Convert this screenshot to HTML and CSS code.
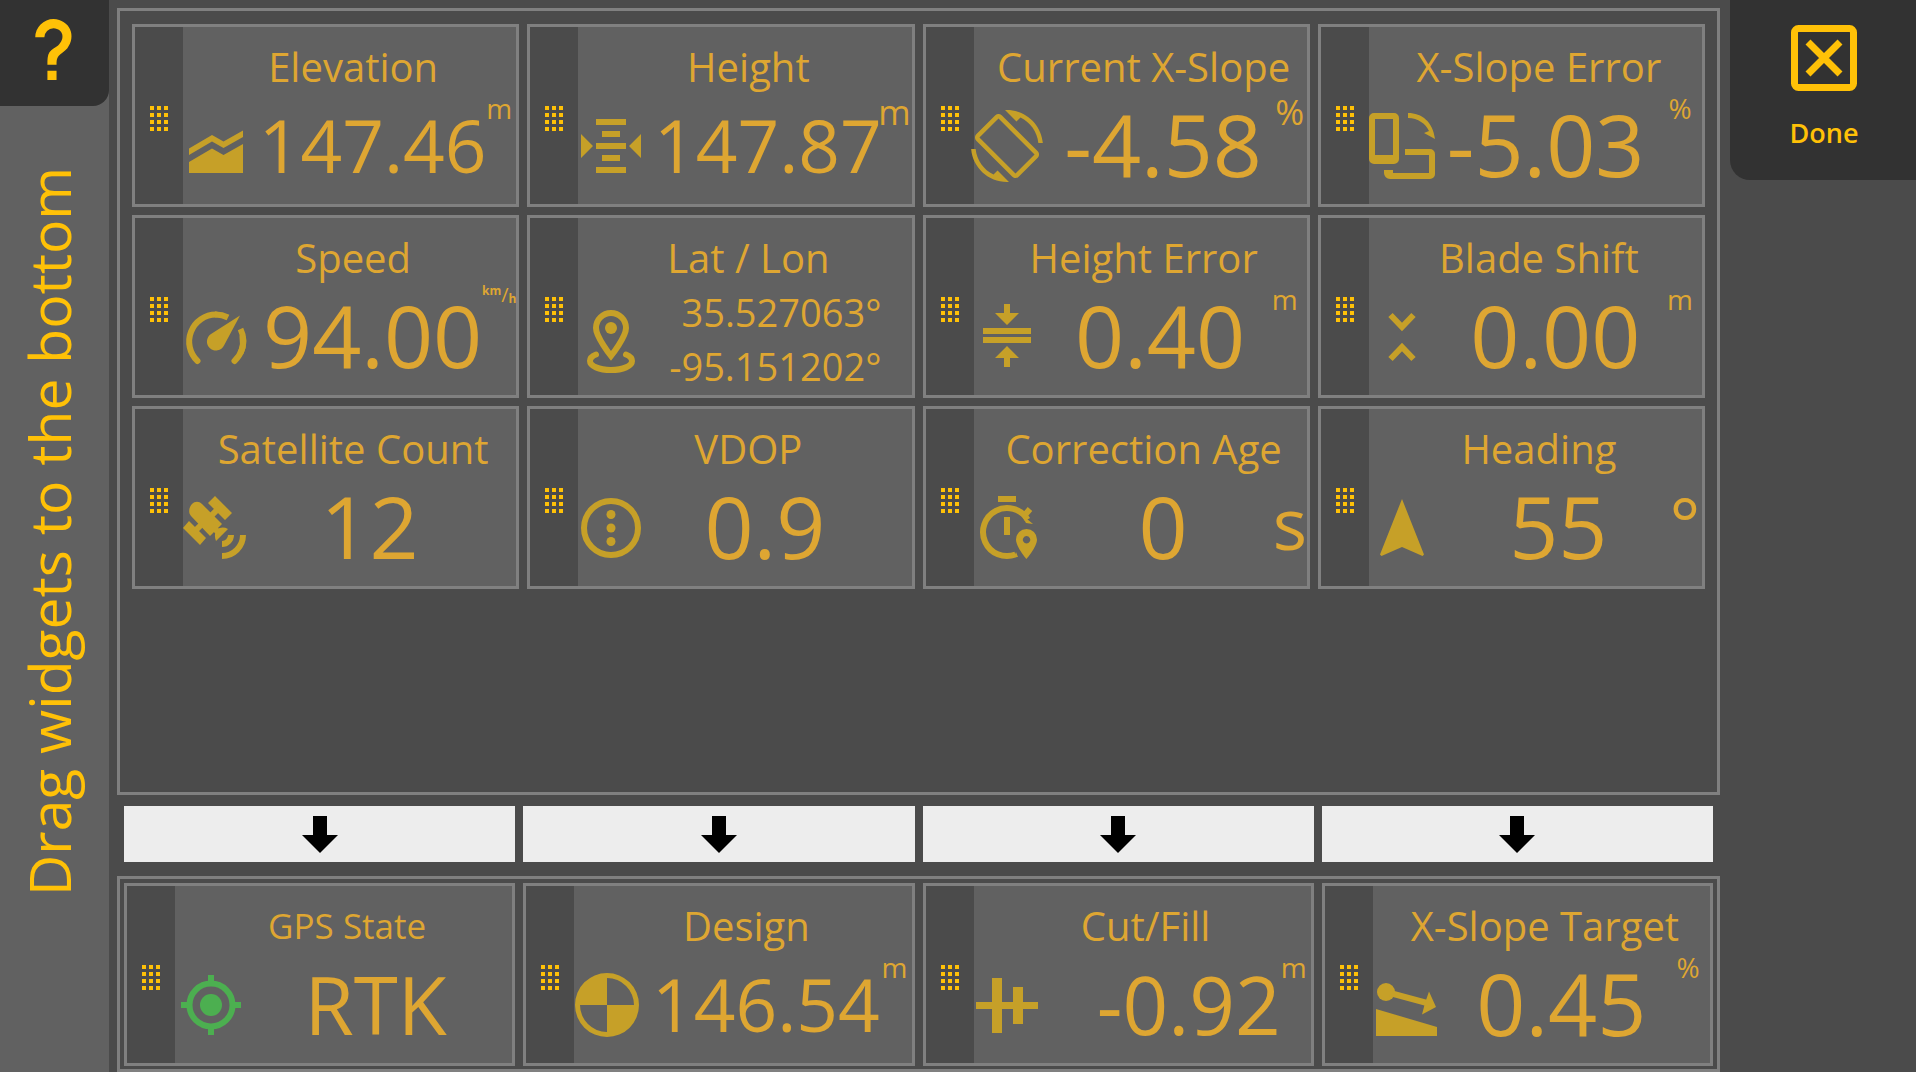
FILE: index.html
```html
<!DOCTYPE html>
<html lang="en">
<head>
<meta charset="utf-8">
<meta name="viewport" content="width=device-width, initial-scale=1">
<title>Widget layout</title>
<link rel="stylesheet" href="styles.css">
</head>
<body>
<svg class="sprite" aria-hidden="true">
  <symbol id="grip" viewBox="0 0 18 25">
    <path d="M0 0h4v4H0zM7 0h4v4H7zM14 0h4v4h-4zM0 7h4v4H0zM7 7h4v4H7zM14 7h4v4h-4zM0 14h4v4H0zM7 14h4v4H7zM14 14h4v4h-4zM0 21h4v4H0zM7 21h4v4H7zM14 21h4v4h-4z"/>
  </symbol>
  <symbol id="down" viewBox="0 0 36 37"><path d="M11 0h14v19h11L18 37 0 19h11z"/></symbol>
</svg>
<div class="app">
  <aside class="side">
    <button class="help" type="button" aria-label="Help">
      <svg class="help-icon" viewBox="0 0 24 24"><path d="M10,19H13V22H10V19M12,2C17.35,2.22 19.68,7.62 16.5,11.67C15.67,12.67 14.33,13.33 13.67,14.17C13,15 13,16 13,17H10C10,15.33 10,13.92 10.67,12.92C11.33,11.92 12.67,11.33 13.5,10.67C15.92,8.43 15.32,5.26 12,5A3,3 0 0,0 9,8H6A6,6 0 0,1 12,2Z"/></svg>
    </button>
    <p class="side-text">Drag widgets to the bottom</p>
  </aside>

  <main class="workspace">
    <section class="panel panel-source">
      <article class="card">
        <button class="handle" type="button" aria-label="Move Elevation"><svg class="grip"><use href="#grip"/></svg></button>
        <div class="content">
          <h2 class="title">Elevation</h2>
          <div class="reading reading-wide">
            <svg class="icon" viewBox="-36 -36 72 72"><path d="M-27 2.5-4-11 7.500-4.500 27-15.500V-9L7.500 2-4-4.500-27 9zM-27 16-4 2.500 7.500 9 27-2V27H-27z"/></svg>
            <span class="value value-sm">147.46</span><span class="unit">m</span>
          </div>
        </div>
      </article>
      <article class="card">
        <button class="handle" type="button" aria-label="Move Height"><svg class="grip"><use href="#grip"/></svg></button>
        <div class="content">
          <h2 class="title">Height</h2>
          <div class="reading reading-wide">
            <svg class="icon" viewBox="-36 -36 72 72"><path d="M-15-27h30v6h-30zM-9-15H9v6H-9zM-15-3h30v6h-30zM-9 9H9v6H-9zM-15 21h30v6h-30zM-30-12-18 0-30 12zM30-12 18 0 30 12z"/></svg>
            <span class="value value-sm">147.87</span><span class="unit unit-md">m</span>
          </div>
        </div>
      </article>
      <article class="card">
        <button class="handle" type="button" aria-label="Move Current X-Slope"><svg class="grip"><use href="#grip"/></svg></button>
        <div class="content">
          <h2 class="title">Current X-Slope</h2>
          <div class="reading reading-wide">
            <svg class="icon" viewBox="0 0 24 24"><path d="M7.5,21.5C4.25,19.94 1.91,16.76 1.55,13H0.05C0.56,19.16 5.71,24 12,24L12.66,23.97L8.85,20.16M14.83,21.19L2.81,9.17L9.17,2.81L21.19,14.83M10.23,1.75C9.64,1.17 8.69,1.17 8.11,1.75L1.75,8.11C1.17,8.7 1.17,9.65 1.75,10.23L13.77,22.25C14.36,22.83 15.31,22.83 15.89,22.25L22.25,15.89C22.83,15.3 22.83,14.35 22.25,13.77L10.23,1.75M16.5,2.5C19.75,4.07 22.09,7.24 22.45,11H23.95C23.44,4.84 18.29,0 12,0L11.34,0.03L15.15,3.84L16.5,2.5Z"/></svg>
            <span class="value">-4.58</span><span class="unit unit-md">%</span>
          </div>
        </div>
      </article>
      <article class="card">
        <button class="handle" type="button" aria-label="Move X-Slope Error"><svg class="grip"><use href="#grip"/></svg></button>
        <div class="content">
          <h2 class="title">X-Slope Error</h2>
          <div class="reading">
            <svg class="icon" viewBox="-36 -36 72 72"><path fill-rule="evenodd" d="M-28-33H-8a5 5 0 0 1 5 5V13a5 5 0 0 1-5 5H-28a5 5 0 0 1-5-5V-28a5 5 0 0 1 5-5zM-27-27V9H-9V-27z"/><path d="M3 3H28a5 5 0 0 1 5 5V28a5 5 0 0 1-5 5H-12a6 6 0 0 1-6-6V24H-9V27H27V9H3zM6-33C20-33 31-24 33-7L22-13 27-15C24-22 16-28 6-28z"/></svg>
            <span class="value value-start">-5.03</span><span class="unit">%</span>
          </div>
        </div>
      </article>
      <article class="card">
        <button class="handle" type="button" aria-label="Move Speed"><svg class="grip"><use href="#grip"/></svg></button>
        <div class="content">
          <h2 class="title">Speed</h2>
          <div class="reading reading-wide">
            <svg class="icon" viewBox="-36 -36 72 72"><g class="line"><path class="round" d="M-18.500 24A27 27 0 0 1 0-22.500"/><path d="M-1-22.500A27 27 0 0 1 12-19.500"/><path d="M24.500-8A27 27 0 0 1 24.500 16"/><path class="round" d="M26.500 0A27 27 0 0 1 18.500 24"/></g><path d="M24-21.500 8 8.500A9 9 0 1 1-5-3z"/></svg>
            <span class="value">94.00</span><span class="unit unit-frac"><sup>km</sup><span>/</span><sub>h</sub></span>
          </div>
        </div>
      </article>
      <article class="card">
        <button class="handle" type="button" aria-label="Move Lat / Lon"><svg class="grip"><use href="#grip"/></svg></button>
        <div class="content">
          <h2 class="title">Lat / Lon</h2>
          <div class="reading reading-wide">
            <svg class="icon" viewBox="-36 -36 72 72"><g class="line"><path d="M0 16C0 16-15-3-15-12A15 15 0 0 1 15-12C15-3 0 16 0 16z"/><path class="round" d="M-15 14.500C-19 16-21 19-21 21C-21 26-12 30 0 30C12 30 21 26 21 21C21 19 19 16 15 14.500"/></g><circle cy="-12" r="6"/></svg>
            <span class="value value-coords">35.527063°<br>-95.151202°</span>
          </div>
        </div>
      </article>
      <article class="card">
        <button class="handle" type="button" aria-label="Move Height Error"><svg class="grip"><use href="#grip"/></svg></button>
        <div class="content">
          <h2 class="title">Height Error</h2>
          <div class="reading">
            <svg class="icon" viewBox="-36 -36 72 72"><path d="M-24-9h48v6h-48zM-24 0h48v6h-48zM-3-33h6v9h9L0-12-12-24h9zM-3 30h6v-9h9L0 9-12 21h9z"/></svg>
            <span class="value">0.40</span><span class="unit">m</span>
          </div>
        </div>
      </article>
      <article class="card">
        <button class="handle" type="button" aria-label="Move Blade Shift"><svg class="grip"><use href="#grip"/></svg></button>
        <div class="content">
          <h2 class="title">Blade Shift</h2>
          <div class="reading">
            <svg class="icon" viewBox="-36 -36 72 72"><path class="line" d="M-11.500-22 0-10 11.500-22M-11.500 22 0 10 11.500 22"/></svg>
            <span class="value">0.00</span><span class="unit">m</span>
          </div>
        </div>
      </article>
      <article class="card">
        <button class="handle" type="button" aria-label="Move Satellite Count"><svg class="grip"><use href="#grip"/></svg></button>
        <div class="content">
          <h2 class="title">Satellite Count</h2>
          <div class="reading">
            <svg class="icon" viewBox="-36 -36 72 72"><path d="M-1-32 16-15 9-8-8-25zM-27-7-10 10-16 17-33 0zM-24-24C-21-27-17-27-14-24L6-4-6 8-25-12C-28-15-27-21-24-24zM0 13C-2 8-1 4 1 2C4-1 8-1 12 1z"/><g class="line"><path d="M-6-11 3-20M-14-4-23 5M-4-2 5 7"/><path d="M15 7A9 9 0 0 1 6 16M27 7A21 21 0 0 1 6 28"/></g></svg>
            <span class="value">12</span>
          </div>
        </div>
      </article>
      <article class="card">
        <button class="handle" type="button" aria-label="Move VDOP"><svg class="grip"><use href="#grip"/></svg></button>
        <div class="content">
          <h2 class="title">VDOP</h2>
          <div class="reading">
            <svg class="icon" viewBox="-36 -36 72 72"><circle class="line" r="27"/><circle cy="-13.500" r="4.500"/><circle r="4.500"/><circle cy="13.500" r="4.500"/></svg>
            <span class="value">0.9</span>
          </div>
        </div>
      </article>
      <article class="card">
        <button class="handle" type="button" aria-label="Move Correction Age"><svg class="grip"><use href="#grip"/></svg></button>
        <div class="content">
          <h2 class="title">Correction Age</h2>
          <div class="reading reading-wide">
            <svg class="icon" viewBox="-36 -36 72 72"><path d="M-9-32H9v6H-9zM-3-11H3V7H-3zM14-14 26-4 19-5zM9 24 11 29 7 29z"/><path class="line" d="M8.500 26.500A24 24 0 1 1 20.500-8.500M17-12 23-19"/><path fill-rule="evenodd" d="M19.500 1A10.500 10.500 0 0 1 30 11.500C30 19 19.500 31 19.500 31C19.500 31 9 19 9 11.500A10.500 10.500 0 0 1 19.500 1zM19.500 8a3.700 3.700 0 1 0 .1 0z"/></svg>
            <span class="value">0</span><span class="unit unit-lg">s</span>
          </div>
        </div>
      </article>
      <article class="card">
        <button class="handle" type="button" aria-label="Move Heading"><svg class="grip"><use href="#grip"/></svg></button>
        <div class="content">
          <h2 class="title">Heading</h2>
          <div class="reading reading-wide">
            <svg class="icon" viewBox="-36 -36 72 72"><path d="M0-29 22 26.500 20.500 28 0 19-20.500 28-22 26.500z"/></svg>
            <span class="value">55</span><span class="unit unit-lg">°</span>
          </div>
        </div>
      </article>
    </section>

    <div class="hints" aria-hidden="true">
      <div class="hint"><svg class="arrow"><use href="#down"/></svg></div>
      <div class="hint"><svg class="arrow"><use href="#down"/></svg></div>
      <div class="hint"><svg class="arrow"><use href="#down"/></svg></div>
      <div class="hint"><svg class="arrow"><use href="#down"/></svg></div>
    </div>

    <section class="panel panel-target">
      <article class="card">
        <button class="handle" type="button" aria-label="Move GPS State"><svg class="grip"><use href="#grip"/></svg></button>
        <div class="content">
          <h2 class="title title-sm">GPS State</h2>
          <div class="reading">
            <svg class="icon icon-ok" viewBox="-36 -36 72 72"><g class="line"><circle cx="3" r="21.500"/><path d="M3-30v8M3 30v-8M-27 0h8M33 0h-8"/></g><circle cx="3" r="11"/></svg>
            <span class="value value-md value-span">RTK</span>
          </div>
        </div>
      </article>
      <article class="card">
        <button class="handle" type="button" aria-label="Move Design"><svg class="grip"><use href="#grip"/></svg></button>
        <div class="content">
          <h2 class="title">Design</h2>
          <div class="reading reading-wide">
            <svg class="icon" viewBox="-36 -36 72 72"><path fill-rule="evenodd" d="M0-32A32 32 0 1 1 0 32A32 32 0 1 1 0-32zM0-27V0H27A27 27 0 0 0 0-27zM0 27V0H-27A27 27 0 0 0 0 27z"/></svg>
            <span class="value value-sm">146.54</span><span class="unit">m</span>
          </div>
        </div>
      </article>
      <article class="card">
        <button class="handle" type="button" aria-label="Move Cut/Fill"><svg class="grip"><use href="#grip"/></svg></button>
        <div class="content">
          <h2 class="title">Cut/Fill</h2>
          <div class="reading reading-wide">
            <svg class="icon" viewBox="-36 -36 72 72"><path d="M-31-3h62v7h-62zM-15-27h10v55h-10zM6-18h10v37H6z"/></svg>
            <span class="value value-md value-end">-0.92</span><span class="unit">m</span>
          </div>
        </div>
      </article>
      <article class="card">
        <button class="handle" type="button" aria-label="Move X-Slope Target"><svg class="grip"><use href="#grip"/></svg></button>
        <div class="content">
          <h2 class="title">X-Slope Target</h2>
          <div class="reading">
            <svg class="icon" viewBox="-36 -36 72 72"><circle cx="-20" cy="-13" r="9"/><path class="line" d="M-16-12 21-2"/><path d="M23-13.500 30 2 16 9.500 19-2zM-30 4 31 22V31H-30z"/></svg>
            <span class="value">0.45</span><span class="unit">%</span>
          </div>
        </div>
      </article>
    </section>
  </main>

  <div class="actions">
    <button class="done" type="button">
      <svg class="done-icon" viewBox="0 0 66 66"><rect x="3.500" y="3.500" width="59" height="59" rx="4"/><path d="M17 17 49 49M49 17 17 49"/></svg>
      <span>Done</span>
    </button>
  </div>
</div>
</body>
</html>
```
FILE: styles.css
```css
:root {
  --bg: #4b4b4b;
  --surface: #616161;
  --dark: #323232;
  --line: #808080;
  --accent: #ffc107;
  --text: #dea632;
  --icon: #c6a028;
}

* {
  box-sizing: border-box;
}

body {
  margin: 0;
  background: var(--bg);
  color: var(--text);
  font-family: "Open Sans", "Noto Sans", sans-serif;
}

button {
  border: 0;
  padding: 0;
  color: var(--accent);
  font: inherit;
  cursor: pointer;
}

svg {
  display: block;
  fill: currentColor;
}

.sprite {
  display: none;
}

.app {
  display: grid;
  grid-template-columns: 109px minmax(0, 1fr) 186px;
  min-height: 100vh;
}

/* Left rail */
.side {
  display: flex;
  flex-direction: column;
  background: var(--surface);
  color: var(--accent);
}

.help {
  display: flex;
  justify-content: center;
  height: 106px;
  padding: 13px 2px 0 0;
  background: var(--dark);
  border-bottom-right-radius: 16px;
}

.help-icon {
  width: 73px;
  height: 73px;
}

.side-text {
  flex: 1;
  margin: 0;
  padding-top: 176px;
  font-size: 57px;
  line-height: 98px;
  white-space: nowrap;
  writing-mode: vertical-rl;
  transform: rotate(180deg);
}

/* Centre */
.workspace {
  display: flex;
  flex-direction: column;
  padding: 8px 10px 0 8px;
}

.panel {
  display: grid;
  grid-template-columns: repeat(4, minmax(0, 1fr));
  align-content: start;
  gap: 8px;
  border: 3px solid var(--line);
}

.panel-source {
  flex: 1;
  padding: 13px 12px;
}

.panel-target {
  padding: 4px 4px 3px;
}

.hints {
  display: grid;
  grid-template-columns: repeat(4, minmax(0, 1fr));
  gap: 8px;
  padding: 11px 7px 14px;
}

.hint {
  display: grid;
  place-items: center;
  height: 56px;
  background: #ededed;
  color: #000;
}

.arrow {
  width: 36px;
  height: 37px;
}

/* Widget card */
.card {
  display: flex;
  height: 183px;
  border: 3px solid var(--line);
  background: var(--surface);
}

.handle {
  display: grid;
  place-items: center;
  width: 48px;
  padding-top: 5px;
  background: var(--bg);
  cursor: grab;
}

.grip {
  width: 18px;
  height: 25px;
}

.content {
  display: flex;
  flex: 1;
  flex-direction: column;
  min-width: 0;
  padding: 9px 0 12px;
}

.title {
  margin: 0;
  padding-left: 7px;
  font-size: 40px;
  font-weight: 400;
  line-height: 62px;
  text-align: center;
  white-space: nowrap;
}

.title-sm {
  font-size: 35px;
}

.reading {
  display: grid;
  flex: 1;
  grid-template-columns: 84px minmax(0, 1fr) 44px;
  align-items: center;
}

.reading-wide {
  grid-template-columns: 80px minmax(0, 1fr) 34px;
}

.icon {
  width: 72px;
  height: 72px;
  margin: 1px 0 0 -3px;
  color: var(--icon);
}

.icon-ok {
  color: #4caf50;
}

.line {
  fill: none;
  stroke: currentColor;
  stroke-width: 6;
}

.round {
  stroke-linecap: round;
}

.value {
  display: flex;
  justify-content: center;
  padding-bottom: 3px;
  font-size: 86px;
  line-height: 72px;
  white-space: nowrap;
}

.value-md {
  padding-bottom: 0;
  font-size: 80px;
}

.value-sm {
  padding-bottom: 0;
  font-size: 73px;
}

.value-start {
  justify-content: flex-start;
  margin-left: -6px;
}

.value-end {
  justify-content: flex-end;
  margin-right: -4px;
}

.value-span {
  grid-column: 2 / -1;
  padding-right: 20px;
}

.value-coords {
  display: block;
  margin: -4px -4px -4px 0;
  padding: 0;
  font-size: 38px;
  line-height: 54px;
  text-align: right;
}

.unit {
  align-self: start;
  font-size: 28px;
  line-height: 20px;
  text-align: center;
}

.unit-md {
  font-size: 35px;
  line-height: 28px;
}

.unit-lg {
  font-size: 72px;
  line-height: 84px;
}

.unit-frac {
  display: flex;
  justify-content: center;
  margin-top: -4px;
  font-size: 20px;
}

.unit-frac sup,
.unit-frac sub {
  font-size: 12px;
  font-weight: 700;
  line-height: 12px;
}

.unit-frac sup {
  align-self: flex-start;
}

.unit-frac sub {
  align-self: flex-end;
}

/* Right */
.done {
  display: flex;
  flex-direction: column;
  align-items: center;
  gap: 22px;
  width: 100%;
  height: 180px;
  padding: 25px 0 0 2px;
  background: var(--dark);
  border-bottom-left-radius: 20px;
  font-size: 27px;
  font-weight: 600;
  line-height: 40px;
}

.done-icon {
  width: 66px;
  height: 66px;
  fill: none;
  stroke: currentColor;
  stroke-width: 7;
}
```
